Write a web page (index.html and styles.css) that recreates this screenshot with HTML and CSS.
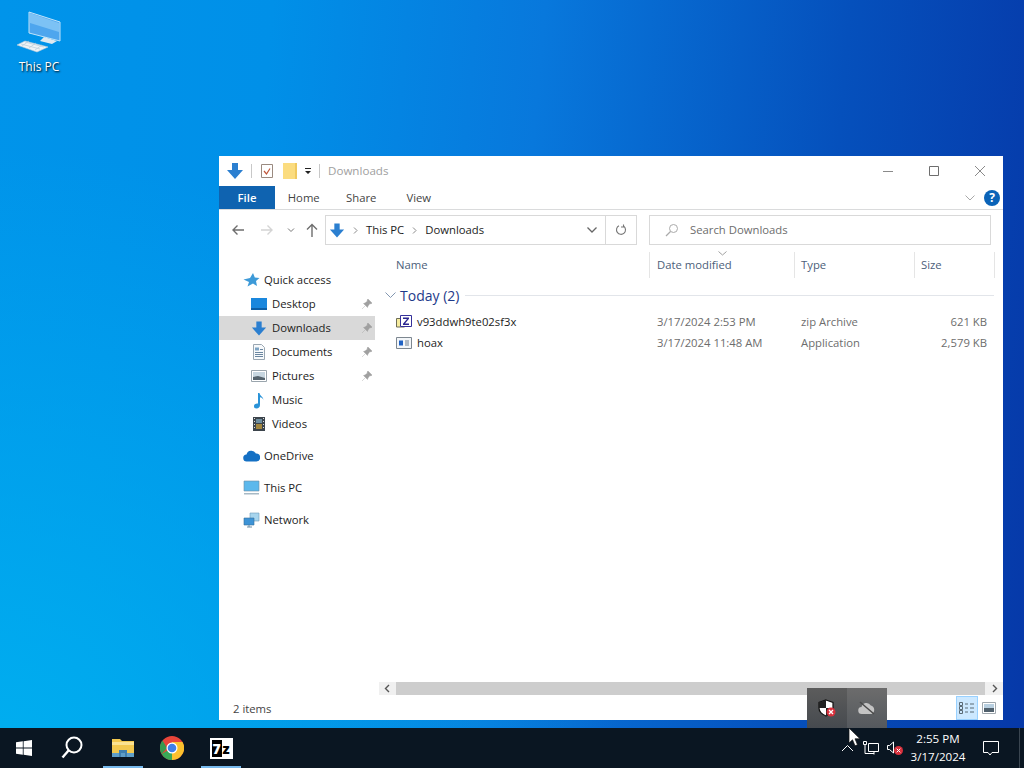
FILE: index.html
```html
<!DOCTYPE html>
<html lang="en">
<head>
    <meta charset="UTF-8">
    <title>Downloads</title>
    <link rel="stylesheet" href="styles.css">
</head>
<body>
    <main class="desktop">
        <div class="desktop-icon">
            <svg width="50" height="46" viewBox="0 0 50 46">
                <path d="M15 4 46 14V33L15 25Z" fill="#4ea6ee" stroke="#bfe4fb"/>
                <path d="M16 5 45 15V24L16 15Z" fill="#7cc2f5"/>
                <path d="M30 29 43 33 38 36 26 33Z" fill="#dfe9f0"/>
                <path d="M11 33 34 39 23 44 3 37Z" fill="#eef3f6" stroke="#b8cbd8" stroke-width=".6"/>
                <path d="M7 36 26 41M11 34 30 39M15 33 8 38M22 35 15 40M28 37 21 42" stroke="#b8cbd8" stroke-width=".7"/>
            </svg>
            <span>This PC</span>
        </div>

        <section class="window">
            <div class="titlebar">
                <svg width="18" height="18" viewBox="0 0 18 18"><path d="M6 1h6v7h5L9 17 1 8h5z" fill="#2b7fd0"/></svg>
                <span class="qa-sep"></span>
                <svg width="16" height="18" viewBox="0 0 16 18"><path d="M2.500 2.500h11v13h-11z" fill="#fff" stroke="#9a8a80"/><path d="M5 9l2.500 3L11 6.500" fill="none" stroke="#c0563a" stroke-width="1.200"/></svg>
                <svg class="qa-folder" width="14" height="16" viewBox="0 0 14 16"><path d="M0 0h14v16H0z" fill="#fbdc7f"/><path d="M12 0h2v16h-2z" fill="#f0c95f"/></svg>
                <svg width="8" height="8" viewBox="0 0 8 8"><path d="M1 1h6v1H1zM1 4h6L4 7z" fill="#222"/></svg>
                <span class="qa-sep"></span>
                <span class="window-title">Downloads</span>
                <div class="window-controls">
                    <svg width="12" height="12" viewBox="0 0 12 12"><path d="M1 6.500h10" stroke="#8a8a8a"/></svg>
                    <svg width="12" height="12" viewBox="0 0 12 12"><path d="M1.500 1.500h9v9h-9z" fill="none" stroke="#6e6e6e"/></svg>
                    <svg width="12" height="12" viewBox="0 0 12 12"><path d="M1 1l10 10M11 1 1 11" stroke="#8a8a8a"/></svg>
                </div>
            </div>

            <nav class="ribbon">
                <span class="ribbon-file">File</span>
                <span class="ribbon-tab">Home</span>
                <span class="ribbon-tab">Share</span>
                <span class="ribbon-tab">View</span>
                <svg class="ribbon-collapse" width="10" height="6" viewBox="0 0 10 6"><path d="M.5.500 5 5 9.500.500" fill="none" stroke="#a8a8a8"/></svg>
                <span class="help">?</span>
            </nav>

            <div class="addressbar">
                <div class="nav-buttons">
                    <svg width="14" height="12" viewBox="0 0 14 12"><path d="M13 6H2M6.500 1.500 2 6l4.500 4.500" fill="none" stroke="#6e6e6e" stroke-width="1.400"/></svg>
                    <svg class="nav-forward" width="14" height="12" viewBox="0 0 14 12"><path d="M1 6h11M7.500 1.500 12 6l-4.500 4.500" fill="none" stroke="#d4d4d4" stroke-width="1.400"/></svg>
                    <svg class="nav-recent" width="8" height="5" viewBox="0 0 8 5"><path d="M1 .500 4 3.500 7 .500" fill="none" stroke="#777"/></svg>
                    <svg class="nav-up" width="12" height="14" viewBox="0 0 12 14"><path d="M6 14V2M1 6.500 6 1.500l5 5" fill="none" stroke="#6e6e6e" stroke-width="1.400"/></svg>
                </div>
                <div class="address">
                    <svg width="16" height="17" viewBox="0 0 18 18"><path d="M6 1h6v7h5L9 17 1 8h5z" fill="#2b7fd0"/></svg>
                    <svg width="5" height="7" viewBox="0 0 5 7"><path d="M1 .500 4 3.500 1 6.500" fill="none" stroke="#8a8a8a"/></svg>
                    <span class="address-text">This PC</span>
                    <svg width="5" height="7" viewBox="0 0 5 7"><path d="M1 .500 4 3.500 1 6.500" fill="none" stroke="#8a8a8a"/></svg>
                    <span class="address-text">Downloads</span>
                    <svg class="address-drop" width="10" height="6" viewBox="0 0 10 6"><path d="M.5.500 5 5 9.500.500" fill="none" stroke="#666" stroke-width="1.300"/></svg>
                    <span class="address-refresh">
                        <svg width="12" height="12" viewBox="0 0 12 12"><path d="M8.800 2.300A4.500 4.500 0 1 1 4 1.800M8.500 .5v2.500H6" fill="none" stroke="#777" stroke-width="1.100"/></svg>
                    </span>
                </div>
                <div class="search">
                    <svg width="14" height="14" viewBox="0 0 14 14"><circle cx="8.500" cy="5.500" r="4" fill="none" stroke="#aaa"/><path d="M5.500 8.500 1 13" stroke="#aaa" stroke-width="1.200"/></svg>
                    <span class="address-text">Search Downloads</span>
                </div>
            </div>

            <div class="explorer">
                <aside class="sidebar">
                    <div class="nav-group">
                        <div class="nav-item nav-root">
                            <svg width="17" height="16" viewBox="0 0 17 16"><path d="M10 1l1.800 4.500L16.500 6l-3.500 3 1 5L10 11.500 4.500 14.500 6 10 .5 7.500 7 6z" fill="#3d9ad8"/></svg>
                            <span>Quick access</span>
                        </div>
                        <div class="nav-item">
                            <svg width="16" height="14" viewBox="0 0 16 14"><path d="M0 1h16v11H0z" fill="#1a87dd"/><path d="M0 11h16v2H0z" fill="#0d5ea5"/></svg>
                            <span>Desktop</span>
                            <svg class="pin" width="10" height="10" viewBox="0 0 10 10"><path d="M6 0l4 4-1 1-1-.5L6 7 5.500 8.500 1.500 4.500 3 4l2.500-2L5 1zM3 7 0 10" fill="#a0a0a0" stroke="#a0a0a0" stroke-width=".4"/></svg>
                        </div>
                        <div class="nav-item selected">
                            <svg width="16" height="17" viewBox="0 0 18 18"><path d="M6 1h6v7h5L9 17 1 8h5z" fill="#2b7fd0"/></svg>
                            <span>Downloads</span>
                            <svg class="pin" width="10" height="10" viewBox="0 0 10 10"><path d="M6 0l4 4-1 1-1-.5L6 7 5.500 8.500 1.500 4.500 3 4l2.500-2L5 1zM3 7 0 10" fill="#a0a0a0" stroke="#a0a0a0" stroke-width=".4"/></svg>
                        </div>
                        <div class="nav-item">
                            <svg width="16" height="16" viewBox="0 0 16 16"><path d="M2.500 .5h8l3 3v12h-11z" fill="#f7f9fb" stroke="#9aa7b2"/><path d="M4 3.500h4v3H4z" fill="#7da4c4"/><path d="M4 8.500h8M4 10.500h8M4 12.500h8M9 5.500h3" stroke="#6a86a0"/></svg>
                            <span>Documents</span>
                            <svg class="pin" width="10" height="10" viewBox="0 0 10 10"><path d="M6 0l4 4-1 1-1-.5L6 7 5.500 8.500 1.500 4.500 3 4l2.500-2L5 1zM3 7 0 10" fill="#a0a0a0" stroke="#a0a0a0" stroke-width=".4"/></svg>
                        </div>
                        <div class="nav-item">
                            <svg width="16" height="14" viewBox="0 0 16 14"><path d="M.5 1.500h15v11H.5z" fill="#fff" stroke="#9aa5ad"/><path d="M2 3h12v8H2z" fill="#c7d6e0"/><path d="M2 11V8l5-1 7 2v2z" fill="#54626c"/></svg>
                            <span>Pictures</span>
                            <svg class="pin" width="10" height="10" viewBox="0 0 10 10"><path d="M6 0l4 4-1 1-1-.5L6 7 5.500 8.500 1.500 4.500 3 4l2.500-2L5 1zM3 7 0 10" fill="#a0a0a0" stroke="#a0a0a0" stroke-width=".4"/></svg>
                        </div>
                        <div class="nav-item">
                            <svg width="16" height="17" viewBox="0 0 16 17"><path d="M7 1h1.500c.5 3 4 3.500 4 7.500 0-2-2-3-3.500-3.200V13c0 2-1.500 3.500-3.500 3.500S3 15.500 3 14s2-3 4-2.500z" fill="#2a93d8"/></svg>
                            <span>Music</span>
                        </div>
                        <div class="nav-item">
                            <svg width="16" height="16" viewBox="0 0 16 16"><path d="M2 1h12v14H2z" fill="#3c444c"/><path d="M5 3h6v4H5z" fill="#6f8fa0"/><path d="M5 8h6v5H5z" fill="#a2863e"/><path d="M3 2h1v1H3zM3 5h1v1H3zM3 8h1v1H3zM3 11h1v1H3zM12 2h1v1h-1zM12 5h1v1h-1zM12 8h1v1h-1zM12 11h1v1h-1z" fill="#ddd"/></svg>
                            <span>Videos</span>
                        </div>
                    </div>
                    <div class="nav-group">
                        <div class="nav-item nav-root">
                            <svg width="17" height="12" viewBox="0 0 17 12"><path d="M4 11.500a3.500 3.500 0 0 1-.5-7 5 5 0 0 1 9.300-1A4 4 0 0 1 13.500 11.500z" fill="#1470c4"/></svg>
                            <span>OneDrive</span>
                        </div>
                    </div>
                    <div class="nav-group">
                        <div class="nav-item nav-root">
                            <svg width="17" height="16" viewBox="0 0 17 16"><path d="M1 1h15v10H1z" fill="#5cb8ec" stroke="#6b8ea5" stroke-width=".6"/><path d="M1 13h15v1.500H1z" fill="#a7b9c5"/></svg>
                            <span>This PC</span>
                        </div>
                    </div>
                    <div class="nav-group">
                        <div class="nav-item nav-root">
                            <svg width="17" height="16" viewBox="0 0 17 16"><path d="M7 1h9v8H7z" fill="#a7d5ee" stroke="#6c9ab8" stroke-width=".6"/><path d="M1 6h10v7H1z" fill="#3d93d6" stroke="#376f9c" stroke-width=".6"/><path d="M4 15h5M6 13v2" stroke="#6c8ea5"/></svg>
                            <span>Network</span>
                        </div>
                    </div>
                </aside>

                <div class="content">
                    <div class="columns">
                        <svg class="sort-arrow" width="9" height="5" viewBox="0 0 9 5"><path d="M.5.500 4.500 4 8.500.500" fill="none" stroke="#a0a0a0"/></svg>
                        <span class="col col-name">Name</span>
                        <span class="col col-date">Date modified</span>
                        <span class="col col-type">Type</span>
                        <span class="col col-size">Size</span>
                    </div>
                    <div class="group-head">
                        <svg width="11" height="7" viewBox="0 0 11 7"><path d="M.5.500 5.500 5.500 10.500.500" fill="none" stroke="#8296b0"/></svg>
                        <span>Today (2)</span>
                        <i class="group-line"></i>
                    </div>
                    <div class="file-row">
                        <span class="col-name file-name">
                            <svg width="16" height="16" viewBox="0 0 16 16"><path d="M.5 4.500h5V3h3v10H.5z" fill="#f7ec9e" stroke="#6d6d55"/><path d="M4.500 1.500h11v11h-11z" fill="#fff" stroke="#35309a"/><path d="M7 3.500h6v1.200L9 9.500h4V11H7V9.800l4-4.800H7z" fill="#2a2590"/></svg>
                            <span>v93ddwh9te02sf3x</span>
                        </span>
                        <span class="col-date">3/17/2024 2:53 PM</span>
                        <span class="col-type">zip Archive</span>
                        <span class="col-size">621 KB</span>
                    </div>
                    <div class="file-row">
                        <span class="col-name file-name">
                            <svg width="16" height="16" viewBox="0 0 16 16"><path d="M.5 2.500h15v11H.5z" fill="#f3f6f9" stroke="#7d8790"/><path d="M3 5.500h4v5H3z" fill="#1f62c4"/><path d="M9 6h4M9 8h4M9 10h4" stroke="#6f7f90"/></svg>
                            <span>hoax</span>
                        </span>
                        <span class="col-date">3/17/2024 11:48 AM</span>
                        <span class="col-type">Application</span>
                        <span class="col-size">2,579 KB</span>
                    </div>
                    <div class="hscroll">
                        <svg width="6" height="9" viewBox="0 0 6 9"><path d="M5 1 1.500 4.500 5 8" fill="none" stroke="#555" stroke-width="1.400"/></svg>
                        <span class="hscroll-thumb"></span>
                        <svg class="hscroll-right" width="6" height="9" viewBox="0 0 6 9"><path d="M1 1l3.500 3.500L1 8" fill="none" stroke="#555" stroke-width="1.400"/></svg>
                    </div>
                </div>
            </div>

            <footer class="statusbar">
                <span>2 items</span>
                <div class="view-toggle">
                    <span class="view-btn active">
                        <svg width="18" height="14" viewBox="0 0 18 14"><path d="M1.500 1.500h3v3h-3zM1.500 5.500h3v3h-3zM1.500 9.500h3v3h-3z" fill="none" stroke="#5a6a75"/><path d="M7 3h3M12 3h4M7 7h3M12 7h4M7 11h3M12 11h4" stroke="#5a6a75"/></svg>
                    </span>
                    <span class="view-btn">
                        <svg width="14" height="12" viewBox="0 0 14 12"><path d="M.5.500h13v11H.5z" fill="#fff" stroke="#a0a8ae"/><path d="M2 2h10v4H2z" fill="#b8cfe0"/><path d="M2 6h10v4H2z" fill="#50606c"/></svg>
                    </span>
                </div>
            </footer>
        </section>

        <div class="tray-popup">
            <span class="tray-popup-item">
                <svg width="18" height="18" viewBox="0 0 18 18"><path d="M8 1l7 2.500V9c0 4-3.500 6.500-7 8-3.500-1.500-7-4-7-8V3.500z" fill="#fff" stroke="#111" stroke-width="1.200"/><path d="M8 1v8H1V3.500zM8 9h7c0 4-3.500 6.500-7 8z" fill="#222"/><circle cx="13" cy="13" r="4.500" fill="#d8303c"/><path d="M11 11l4 4M15 11l-4 4" stroke="#fff" stroke-width="1.300"/></svg>
            </span>
            <span class="tray-popup-item tray-popup-hover">
                <svg width="18" height="14" viewBox="0 0 18 14"><path d="M4 13a3.500 3.500 0 0 1-.5-7 5 5 0 0 1 9.300-1.500A4.500 4.500 0 0 1 13.500 13z" fill="#c4c4c4"/><path d="M2 1l14 12" stroke="#4a4a4a" stroke-width="1.500"/></svg>
            </span>
        </div>

        <footer class="taskbar">
            <span class="task-item">
                <svg width="16" height="16" viewBox="0 0 16 16"><path d="M0 2.300 6.800 1.300V7.600H0zM7.600 1.200 16 0V7.600H7.600zM0 8.400H6.800V14.700L0 13.700zM7.600 8.400H16V16L7.600 14.800z" fill="#fff"/></svg>
            </span>
            <span class="task-item">
                <svg class="task-search" width="22" height="24" viewBox="0 0 22 24"><circle cx="13" cy="9" r="7.500" fill="none" stroke="#fff" stroke-width="2"/><path d="M7.500 14.500 1.500 21.500" stroke="#fff" stroke-width="2.400"/></svg>
            </span>
            <span class="task-item running">
                <svg width="22" height="20" viewBox="0 0 22 20"><path d="M0 1h8l2 2h12v16H0z" fill="#f2c84f"/><path d="M0 4h22v3H0z" fill="#fbe291"/><path d="M0 15h22v4H0z" fill="#5f9ec8"/><path d="M7 12h8v7h-2v-4H9v4H7z" fill="#3f7fb0"/></svg>
            </span>
            <span class="task-item">
                <svg width="24" height="24" viewBox="0 0 24 24"><circle cx="12" cy="12" r="12" fill="#e8453a"/><path d="M12 12 1.600 18A12 12 0 0 0 12 24c1 0 2 0 3-.4z" fill="#3aa757"/><path d="M12 6h10.500A12 12 0 0 1 12 24z" fill="#fbc02d"/><path d="M1.600 18A12 12 0 0 1 2.500 4.600L7 12z" fill="#359a4f"/><circle cx="12" cy="12" r="5.500" fill="#fff"/><circle cx="12" cy="12" r="4.300" fill="#3f7fe8"/></svg>
            </span>
            <span class="task-item running">
                <span class="sevenzip"><b>7</b>z</span>
            </span>
            <div class="tray">
                <svg width="13" height="8" viewBox="0 0 13 8"><path d="M1 7 6.500 1.500 12 7" fill="none" stroke="#fff"/></svg>
                <svg class="tray-net" width="16" height="14" viewBox="0 0 16 14"><path d="M5.500 2.500h10v8h-10zM.5.500h3v3h-3zM2 3.500v9h9M11 10.500v3" fill="none" stroke="#fff"/></svg>
                <svg class="tray-sound" width="16" height="14" viewBox="0 0 16 14"><path d="M.5 4.500h2l4-3.500v11l-4-3.500h-2z" fill="none" stroke="#fff"/><circle cx="11.500" cy="9.500" r="4.500" fill="#d8303c"/><path d="M9.700 7.700l3.600 3.600M13.300 7.700l-3.600 3.600" stroke="#fff"/></svg>
                <div class="clock">
                    <span>2:55 PM</span>
                    <span>3/17/2024</span>
                </div>
                <svg class="tray-notify" width="16" height="16" viewBox="0 0 16 16"><path d="M.5 1.500h15v11H9l-2 2.500-2-2.500H.5z" fill="none" stroke="#fff"/></svg>
                <i class="show-desktop"></i>
            </div>
        </footer>

        <svg class="cursor" width="13" height="20" viewBox="0 0 13 20"><path d="M1 1v15l3.500-3.200 2.500 6 2.500-1-2.500-6h5z" fill="#fff" stroke="#111" stroke-width=".7"/></svg>
    </main>
</body>
</html>
```

FILE: styles.css
```css
html, body {
    margin: 0;
    padding: 0;
    height: 100%;
    overflow: hidden;
}
body {
    font-family: "Open Sans", "Liberation Sans", sans-serif;
    font-size: 11.3px;
    color: #1c1c1c;
}
svg {
    display: block;
    flex: none;
}
.desktop {
    position: relative;
    width: 1024px;
    height: 768px;
    background:
        radial-gradient(ellipse 620px 620px at 0 100%, rgba(0, 178, 240, 0.9), rgba(0, 178, 240, 0) 100%),
        linear-gradient(95deg, #0094ea 0%, #0090e8 25%, #0878dc 50%, #0550bc 78%, #0638a8 100%);
}
.desktop-icon {
    position: absolute;
    left: 12px;
    top: 8px;
    width: 54px;
    display: flex;
    flex-direction: column;
    align-items: center;
    gap: 4px;
    color: #fff;
    font-size: 12px;
    text-shadow: 1px 1px 2px #000;
}
.window {
    position: absolute;
    left: 219px;
    top: 156px;
    width: 784px;
    height: 564px;
    background: #fff;
    display: flex;
    flex-direction: column;
}

/* titulo e abas */
.titlebar {
    height: 30px;
    display: flex;
    align-items: center;
    gap: 7px;
    padding-left: 7px;
}
.qa-folder {
    margin-left: 1px;
}
.qa-sep {
    width: 1px;
    height: 14px;
    background: #c8c8c8;
}
.window-title {
    margin-left: 1px;
    margin-bottom: 2px;
    color: #a0a0a0;
    font-size: 11.6px;
}
.window-controls {
    margin-left: auto;
    display: flex;
    gap: 34px;
    padding-right: 17px;
}
.ribbon {
    height: 23px;
    display: flex;
    align-items: center;
    border-bottom: 1px solid #dadbdc;
}
.ribbon-file {
    width: 56px;
    height: 23px;
    line-height: 23px;
    text-align: center;
    background: #0f63b0;
    color: #fff;
    font-weight: 600;
}
.ribbon-tab {
    width: 57.5px;
    text-align: center;
    color: #444;
}
.ribbon-collapse {
    margin-left: auto;
    margin-right: 9px;
}
.help {
    width: 16px;
    height: 16px;
    line-height: 16px;
    margin-right: 3px;
    border-radius: 50%;
    background: #0a63b8;
    color: #fff;
    font-size: 12px;
    font-weight: 700;
    text-align: center;
}

/* barra de endereco */
.addressbar {
    height: 30px;
    margin-top: 5px;
    display: flex;
    align-items: center;
}
.nav-buttons {
    width: 106px;
    flex: none;
    display: flex;
    align-items: center;
    padding-left: 12px;
    box-sizing: border-box;
}
.nav-forward {
    margin-left: 15px;
}
.nav-recent {
    margin-left: 13px;
}
.nav-up {
    margin-left: 11px;
}
.address {
    width: 312px;
    height: 30px;
    box-sizing: border-box;
    border: 1px solid #d9d9d9;
    display: flex;
    align-items: center;
    gap: 8px;
    padding-left: 3px;
}
.address-text {
    margin-bottom: 2px;
}
.address-drop {
    margin-left: auto;
}
.address-refresh {
    width: 30px;
    height: 28px;
    border-left: 1px solid #d9d9d9;
    display: flex;
    align-items: center;
    justify-content: center;
}
.search {
    width: 342px;
    height: 30px;
    margin-left: 12px;
    box-sizing: border-box;
    border: 1px solid #d9d9d9;
    display: flex;
    align-items: center;
    gap: 11px;
    padding-left: 15px;
    color: #6d6d6d;
}

/* painel de navegacao */
.explorer {
    flex: 1;
    display: flex;
    min-height: 0;
}
.sidebar {
    width: 156px;
    flex: none;
    padding-top: 23px;
    box-sizing: border-box;
}
.nav-group {
    margin-bottom: 8px;
}
.nav-item {
    height: 24px;
    display: flex;
    align-items: center;
    gap: 5px;
    padding-left: 32px;
    position: relative;
}
.nav-item span {
    margin-bottom: 2px;
}
.nav-root {
    padding-left: 24px;
    gap: 4px;
}
.nav-item.selected {
    background: #d9d9d9;
}
.pin {
    position: absolute;
    left: 143px;
    top: 7px;
}

/* lista de arquivos */
.content {
    flex: 1;
    min-width: 0;
    position: relative;
    display: flex;
    flex-direction: column;
}
.columns {
    height: 26px;
    margin-top: 7px;
    display: flex;
    align-items: center;
    color: #4c607a;
    position: relative;
}
.sort-arrow {
    position: absolute;
    left: 343px;
    top: -1px;
}
.col {
    height: 26px;
    line-height: 26px;
    box-sizing: border-box;
    border-right: 1px solid #e5e5e5;
}
.col-name {
    width: 275px;
    flex: none;
    padding-left: 21px;
    box-sizing: border-box;
}
.col-date {
    width: 145px;
    flex: none;
    padding-left: 7px;
    box-sizing: border-box;
}
.col-type {
    width: 120px;
    flex: none;
    padding-left: 6px;
    box-sizing: border-box;
}
.col-size {
    width: 80px;
    flex: none;
    padding-left: 6px;
    box-sizing: border-box;
}
.group-head {
    height: 24px;
    margin-top: 5px;
    display: flex;
    align-items: center;
    gap: 4px;
    padding-left: 10px;
    color: #1e3a8a;
    font-size: 14px;
}
.group-line {
    flex: 1;
    height: 1px;
    margin: 0 9px 0 2px;
    background: #e2e5ea;
}
.file-row {
    height: 21px;
    display: flex;
    align-items: center;
    color: #6d6d6d;
}
.group-head + .file-row {
    margin-top: 4px;
}
.file-row .col-size {
    text-align: right;
    padding-right: 8px;
}
.file-name {
    display: flex;
    align-items: center;
    gap: 5px;
    color: #1c1c1c;
}
.hscroll {
    margin-top: auto;
    height: 13px;
    margin-bottom: 25px;
    margin-left: 4px;
    display: flex;
    align-items: center;
    padding: 0 5px;
    box-sizing: border-box;
    background: #f0f0f0;
}
.hscroll-thumb {
    width: 589px;
    height: 13px;
    margin-left: 6px;
    background: #cdcdcd;
}
.hscroll-right {
    margin-left: auto;
}
.statusbar {
    position: absolute;
    left: 0;
    right: 0;
    bottom: 0;
    height: 24px;
    display: flex;
    align-items: center;
    padding-left: 14px;
    color: #444;
}
.view-toggle {
    margin-left: auto;
    margin-right: 4px;
    display: flex;
    align-items: center;
    gap: 2px;
}
.view-btn {
    width: 20px;
    height: 22px;
    display: flex;
    align-items: center;
    justify-content: center;
}
.view-btn.active {
    background: #cce8ff;
    outline: 1px solid #99d1ff;
}

/* popup da bandeja */
.tray-popup {
    position: absolute;
    left: 807px;
    top: 688px;
    width: 80px;
    height: 40px;
    display: flex;
    background: linear-gradient(#5c5c5c, #464a4f);
}
.tray-popup-item {
    width: 40px;
    display: flex;
    align-items: center;
    justify-content: center;
}
.tray-popup-hover {
    background: linear-gradient(#6c6c6c, #55595e);
}

/* barra de tarefas */
.taskbar {
    position: absolute;
    left: 0;
    right: 0;
    bottom: 0;
    height: 40px;
    background: #0a1622;
    display: flex;
    align-items: center;
    color: #fff;
}
.task-item {
    width: 48px;
    height: 40px;
    margin-right: 1.25px;
    box-sizing: border-box;
    display: flex;
    align-items: center;
    justify-content: center;
    position: relative;
}
.task-item.running::after {
    content: "";
    position: absolute;
    left: 4px;
    right: 4px;
    bottom: 0;
    height: 2px;
    background: #76b9ed;
}
.task-search {
    margin-right: 2px;
}
.sevenzip {
    width: 19px;
    height: 17px;
    display: flex;
    align-items: center;
    background: #fff;
    border: 2px solid #fff;
    color: #000;
    font-weight: 800;
    font-size: 14px;
    line-height: 17px;
}
.sevenzip b {
    width: 10px;
    height: 17px;
    background: #000;
    color: #fff;
    text-align: center;
    margin-right: 1px;
}
.tray {
    margin-left: auto;
    height: 40px;
    display: flex;
    align-items: center;
}
.tray-net {
    margin-left: 9px;
}
.tray-sound {
    margin-left: 8px;
}
.clock {
    width: 78px;
    margin-left: -4px;
    display: flex;
    flex-direction: column;
    align-items: center;
    line-height: 18px;
    font-size: 11.6px;
}
.tray-notify {
    margin-left: 6px;
}
.show-desktop {
    width: 1px;
    height: 40px;
    margin-left: 20px;
    margin-right: 4px;
    background: #3a4550;
}
.cursor {
    position: absolute;
    left: 848px;
    top: 727px;
}
```
